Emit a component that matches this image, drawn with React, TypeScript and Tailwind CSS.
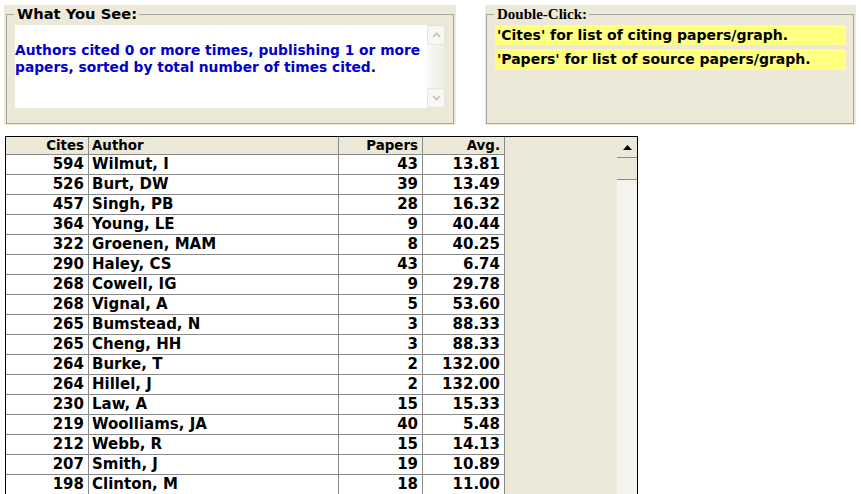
import React from "react";

interface Row {
  cites: number;
  author: string;
  papers: number;
  avg: string;
}

const rows: Row[] = [
  { cites: 594, author: "Wilmut, I", papers: 43, avg: "13.81" },
  { cites: 526, author: "Burt, DW", papers: 39, avg: "13.49" },
  { cites: 457, author: "Singh, PB", papers: 28, avg: "16.32" },
  { cites: 364, author: "Young, LE", papers: 9, avg: "40.44" },
  { cites: 322, author: "Groenen, MAM", papers: 8, avg: "40.25" },
  { cites: 290, author: "Haley, CS", papers: 43, avg: "6.74" },
  { cites: 268, author: "Cowell, IG", papers: 9, avg: "29.78" },
  { cites: 268, author: "Vignal, A", papers: 5, avg: "53.60" },
  { cites: 265, author: "Bumstead, N", papers: 3, avg: "88.33" },
  { cites: 265, author: "Cheng, HH", papers: 3, avg: "88.33" },
  { cites: 264, author: "Burke, T", papers: 2, avg: "132.00" },
  { cites: 264, author: "Hillel, J", papers: 2, avg: "132.00" },
  { cites: 230, author: "Law, A", papers: 15, avg: "15.33" },
  { cites: 219, author: "Woolliams, JA", papers: 40, avg: "5.48" },
  { cites: 212, author: "Webb, R", papers: 15, avg: "14.13" },
  { cites: 207, author: "Smith, J", papers: 19, avg: "10.89" },
  { cites: 198, author: "Clinton, M", papers: 18, avg: "11.00" },
];

const verdana = "font-['DejaVu_Sans','Verdana',sans-serif]";

const Chevron: React.FC<{ up?: boolean }> = ({ up }) => (
  <svg width="9" height="6" viewBox="0 0 9 6">
    <path
      d={up ? "M1 5 L4.5 1.5 L8 5" : "M1 1 L4.5 4.5 L8 1"}
      fill="none"
      stroke="#c2c2b8"
      strokeWidth="1.6"
    />
  </svg>
);

export default function App() {
  return (
    <div className={`w-[861px] h-[494px] overflow-hidden bg-white ${verdana}`}>
      <div className="flex pt-[5px] pl-[4px] gap-[29px]">
        {/* What You See */}
        <div className="w-[452px] h-[120px] bg-[#ECE9D8]">
          <fieldset className="ml-[2px] w-[448px] h-[119px] border border-[#a9a89e]">
            <legend className="ml-[7px] pl-[3px] pr-[2px] text-[14.7px] leading-[18px] font-bold text-black">
              What You See:
            </legend>
            <div className="ml-[8px] mt-[2px] w-[430px] h-[83px] flex bg-white">
              <div className="flex-1 pt-[17px] text-[13.8px] leading-[17px] font-bold text-[#0000cc]">
                Authors cited 0 or more times, publishing 1 or more papers, sorted by total number of times cited.
              </div>
              <div className="w-[18px] flex flex-col bg-gradient-to-r from-[#fafaf7] to-[#eeede5]">
                <div className="h-[20px] flex items-center justify-center border border-[#e6e5dc] rounded-[2px] bg-[#f7f7f3]">
                  <Chevron up />
                </div>
                <div className="flex-1" />
                <div className="h-[20px] flex items-center justify-center border border-[#e6e5dc] rounded-[2px] bg-[#f7f7f3]">
                  <Chevron />
                </div>
              </div>
            </div>
          </fieldset>
        </div>

        {/* Double-Click */}
        <div className="w-[371px] h-[120px] bg-[#ECE9D8]">
          <fieldset className="ml-[1px] w-[368px] h-[119px] border border-[#a9a89e]">
            <legend className="ml-[7px] pl-[3px] pr-[2px] font-['Liberation_Serif',serif] text-[15px] leading-[18px] font-bold text-black">
              Double-Click:
            </legend>
            <div className="ml-[8px] mt-[2px] w-[351px] flex flex-col gap-[4px] text-[14px] font-bold text-black">
              <div className="h-[20px] pl-[2px] leading-[20px] bg-[#ffff80]">
                'Cites' for list of citing papers/graph.
              </div>
              <div className="h-[21px] pl-[2px] leading-[21px] bg-[#ffff80]">
                'Papers' for list of source papers/graph.
              </div>
            </div>
          </fieldset>
        </div>
      </div>

      {/* Table */}
      <div className="ml-[5px] mt-[11px] w-[633px] flex border border-black font-bold text-black">
        <div className="w-[499px]">
          <div className="grid grid-cols-[83px_250px_84px_82px] h-[18px] bg-[#ECE9D8] text-[13.4px] leading-[17px]">
            <div className="border-r border-b border-[#8a8a8a] text-right pr-[4px]">Cites</div>
            <div className="border-r border-b border-[#8a8a8a] pl-[3px]">Author</div>
            <div className="border-r border-b border-[#8a8a8a] text-right pr-[4px]">Papers</div>
            <div className="border-r border-b border-[#8a8a8a] text-right pr-[4px]">Avg.</div>
          </div>
          {rows.map((r, i) => (
            <div
              key={i}
              className="grid grid-cols-[83px_250px_84px_82px] h-[20px] bg-white text-[15px] leading-[19px]"
            >
              <div className="border-r border-b border-[#8a8a8a] text-right pr-[4px]">{r.cites}</div>
              <div className="border-r border-b border-[#8a8a8a] pl-[3px] whitespace-nowrap">{r.author}</div>
              <div className="border-r border-b border-[#8a8a8a] text-right pr-[4px]">{r.papers}</div>
              <div className="border-r border-b border-[#8a8a8a] text-right pr-[4px]">{r.avg}</div>
            </div>
          ))}
        </div>
        <div className="w-[112px] bg-[#ECE9D8]" />
        <div className="w-[20px] flex flex-col bg-[#f4f3ee]">
          <div className="h-[21px] flex items-center justify-center bg-[#ECE9D8] border-b border-[#8a8a8a]">
            <svg width="9" height="5" viewBox="0 0 9 5">
              <path d="M0 5 L4.5 0 L9 5 Z" fill="#000" />
            </svg>
          </div>
          <div className="h-[22px] bg-[#ECE9D8] border-b border-[#8a8a8a]" />
          <div className="flex-1" />
        </div>
      </div>
    </div>
  );
}
